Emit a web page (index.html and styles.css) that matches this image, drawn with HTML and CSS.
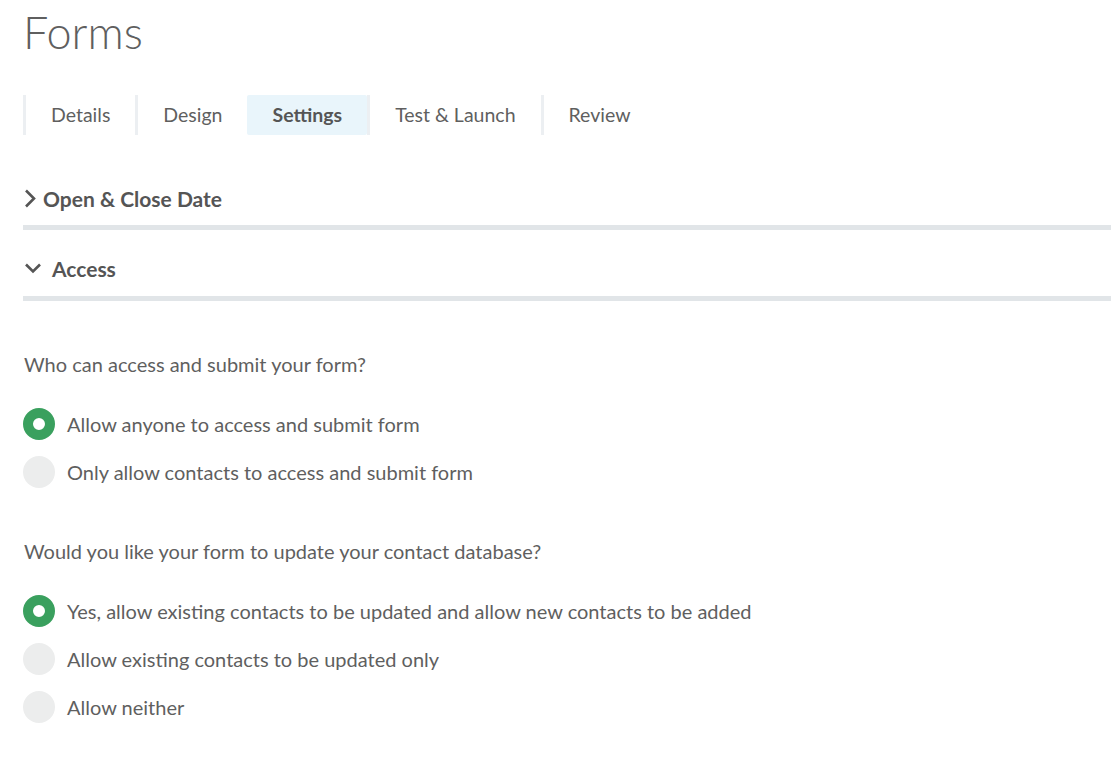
FILE: index.html
```html
<!DOCTYPE html>
<html lang="en">
<head>
  <meta charset="UTF-8" />
  <title>Forms - Settings</title>
  <link rel="stylesheet" href="styles.css">
</head>
<body>
  <div class="page">
    <h1 class="page-title">Forms</h1>

    <nav class="tabs">
      <a class="tab">Details</a>
      <a class="tab">Design</a>
      <a class="tab active">Settings</a>
      <a class="tab">Test &amp; Launch</a>
      <a class="tab">Review</a>
    </nav>

    <!-- Collapsed section -->
    <section class="panel">
      <div class="panel-header first">
        <svg class="chevron-right" width="12" height="19" viewBox="0 0 12 19">
          <polyline points="2,1.5 10,9.5 2,17.5" fill="none" stroke="#555" stroke-width="2.6" />
        </svg>
        <span>Open &amp; Close Date</span>
      </div>
    </section>

    <!-- Expanded section -->
    <section class="panel">
      <div class="panel-header">
        <svg class="chevron-down" width="18" height="12" viewBox="0 0 18 12">
          <polyline points="2,2.5 9,9.5 16,2.5" fill="none" stroke="#555" stroke-width="2.6" />
        </svg>
        <span>Access</span>
      </div>

      <div class="panel-body">
        <p class="question">Who can access and submit your form?</p>
        <div class="options">
          <label class="option"><span class="radio checked"></span>Allow anyone to access and submit form</label>
          <label class="option"><span class="radio"></span>Only allow contacts to access and submit form</label>
        </div>

        <p class="question">Would you like your form to update your contact database?</p>
        <div class="options">
          <label class="option"><span class="radio checked"></span>Yes, allow existing contacts to be updated and allow new contacts to be added</label>
          <label class="option"><span class="radio"></span>Allow existing contacts to be updated only</label>
          <label class="option"><span class="radio"></span>Allow neither</label>
        </div>
      </div>
    </section>
  </div>
</body>
</html>
```

FILE: styles.css
```css
/* Base styles */
body {
  margin: 0;
  font-family: Lato, 'Open Sans', sans-serif;
  color: #5f5f5f;
  background-color: #fff;
}

.page {
  padding-left: 23px;
}

.page-title {
  margin: 5px 0 0 0;
  font-size: 45px;
  font-weight: 300;
  line-height: 1.2;
  color: #5f5f5f;
}

/* Tabs */
.tabs {
  display: flex;
  margin-top: 36px;
}

.tab {
  height: 40px;
  line-height: 40px;
  padding: 0 25px;
  border-left: 3px solid #eceff2;
  font-size: 19.5px;
  color: #5f5f5f;
  cursor: pointer;
}

.tab.active {
  border-left: none;
  background-color: #e9f5fb;
  font-weight: 700;
  color: #555;
  border-radius: 2px;
}

/* Collapsible panels */
.panel-header {
  display: flex;
  align-items: center;
  gap: 7px;
  height: 24px;
  padding: 26px 0 16px 0;
  border-bottom: 5px solid #e1e5e8;
  font-size: 21px;
  font-weight: 700;
  color: #555;
}

.panel-header.first {
  padding-top: 51px;
  padding-bottom: 15px;
}

.chevron-right {
  margin-left: 1px;
}

.chevron-down {
  margin-left: 1px;
  margin-right: 3px;
}

/* Questions */
.panel-body {
  padding-top: 51px;
}

.question {
  margin: 0 0 32px 1px;
  font-size: 20px;
  line-height: 24px;
}

.options {
  display: flex;
  flex-direction: column;
  gap: 16px;
  margin-bottom: 51px;
}

.option {
  display: flex;
  align-items: center;
  gap: 12px;
  font-size: 20px;
  cursor: pointer;
}

.radio {
  width: 32px;
  height: 32px;
  border-radius: 50%;
  background-color: #eceded;
  box-sizing: border-box;
  flex-shrink: 0;
}

.radio.checked {
  background-color: #fff;
  border: 10px solid #3aa05e;
}
```
